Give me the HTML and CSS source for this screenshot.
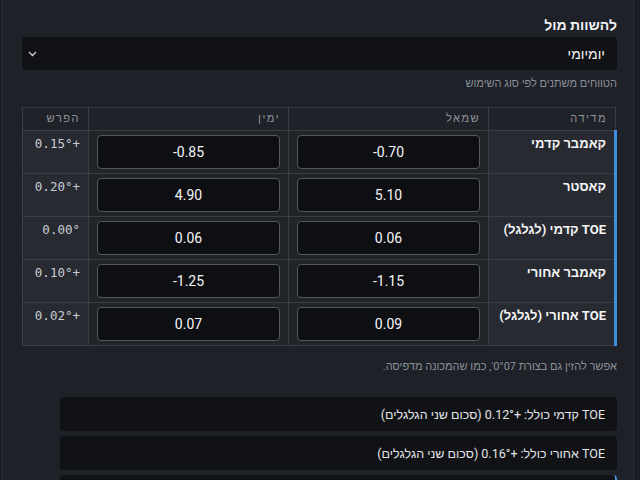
FILE: index.html
```html
<!DOCTYPE html>
<html lang="he" dir="rtl">
<head>
    <meta charset="UTF-8">
    <meta name="viewport" content="width=device-width, initial-scale=1.0">
    <title>השוואת מדידות</title>
    <link rel="stylesheet" href="styles.css">
</head>
<body>
    <div class="card">
        <div class="field-label">להשוות מול</div>
        <div class="select">
            <span>יומיומי</span>
            <svg class="chevron" width="9" height="6" viewBox="0 0 9 6">
                <polyline points="1,1 4.5,4.5 8,1" fill="none" stroke="#c9ccd2" stroke-width="1.3"/>
            </svg>
        </div>
        <p class="hint">הטווחים משתנים לפי סוג השימוש</p>

        <table class="measure-table">
            <colgroup>
                <col class="col-name">
                <col class="col-val">
                <col class="col-val">
                <col class="col-diff">
            </colgroup>
            <thead>
                <tr>
                    <th>מדידה</th>
                    <th>שמאל</th>
                    <th>ימין</th>
                    <th>הפרש</th>
                </tr>
            </thead>
            <tbody>
                <tr>
                    <td class="name">קאמבר קדמי</td>
                    <td class="val"><input value="-0.70"></td>
                    <td class="val"><input value="-0.85"></td>
                    <td class="diff">+0.15°</td>
                </tr>
                <tr>
                    <td class="name">קאסטר</td>
                    <td class="val"><input value="5.10"></td>
                    <td class="val"><input value="4.90"></td>
                    <td class="diff">+0.20°</td>
                </tr>
                <tr>
                    <td class="name">TOE קדמי (לגלגל)</td>
                    <td class="val"><input value="0.06"></td>
                    <td class="val"><input value="0.06"></td>
                    <td class="diff">0.00°</td>
                </tr>
                <tr>
                    <td class="name">קאמבר אחורי</td>
                    <td class="val"><input value="-1.15"></td>
                    <td class="val"><input value="-1.25"></td>
                    <td class="diff">+0.10°</td>
                </tr>
                <tr>
                    <td class="name">TOE אחורי (לגלגל)</td>
                    <td class="val"><input value="0.09"></td>
                    <td class="val"><input value="0.07"></td>
                    <td class="diff">+0.02°</td>
                </tr>
            </tbody>
        </table>

        <p class="hint note">אפשר להזין גם בצורת 0°07', כמו שהמכונה מדפיסה.</p>

        <div class="summary">
            <div class="summary-row">TOE קדמי כולל: +0.12° (סכום שני הגלגלים)</div>
            <div class="summary-row">TOE אחורי כולל: +0.16° (סכום שני הגלגלים)</div>
            <div class="summary-row active"></div>
        </div>
    </div>
</body>
</html>
```

FILE: styles.css
```css
body {
    margin: 0;
    padding: 0 6px 0 2px;
    background-color: #1b1e24;
    color: #e6e8eb;
    font-family: Roboto, "Liberation Sans", sans-serif;
}
.card {
    background-color: #1e2128;
    border: 1px solid #2b2f37;
    border-top: none;
    padding: 16px 16px 40px 19px;
    min-height: 480px;
    box-sizing: border-box;
}
.field-label {
    font-size: 14px;
    font-weight: bold;
    line-height: 18px;
    color: #f1f2f4;
}
.select {
    margin-top: 3px;
    height: 33px;
    background-color: #111215;
    border-radius: 4px;
    display: flex;
    align-items: center;
    justify-content: space-between;
    padding: 0 12px 0 6px;
    font-size: 14px;
    color: #f1f2f4;
}
.chevron {
    display: block;
}
.hint {
    margin: 6px 0 0;
    font-size: 11px;
    line-height: 16px;
    color: #8b9097;
}

/* טבלת המדידות */
.measure-table {
    width: 100%;
    margin-top: 15px;
    border-collapse: collapse;
    table-layout: fixed;
}
.col-name {
    width: 127px;
}
.col-val {
    width: 200px;
}
.col-diff {
    width: 66px;
}
.measure-table th,
.measure-table td {
    border: 1px solid #3a3d44;
    text-align: right;
    vertical-align: top;
}
.measure-table th {
    background-color: #1f2229;
    padding: 4px 8px;
    font-size: 11px;
    line-height: 14px;
    font-weight: normal;
    letter-spacing: 1.5px;
    color: #8e939a;
}
.measure-table td {
    padding: 4px 8px;
    background-color: #212429;
}
.measure-table td.name {
    background-color: #272a30;
    border-right: 3px solid #3f8fe0;
    font-size: 13px;
    font-weight: bold;
    line-height: 18px;
    padding: 4px 8px 4px 0;
    white-space: nowrap;
    color: #f4f5f7;
}
.measure-table td.diff {
    background-color: #272a30;
    font-family: "DejaVu Sans Mono", monospace;
    font-size: 12.5px;
    line-height: 18px;
    color: #c9cdd3;
}
.val input {
    display: block;
    width: 100%;
    height: 34px;
    box-sizing: border-box;
    background-color: #0e0f12;
    border: 1px solid #54575e;
    border-radius: 4px;
    color: #f4f5f7;
    font-family: Roboto, "Liberation Sans", sans-serif;
    font-size: 14px;
    text-align: center;
    direction: ltr;
}
.note {
    margin-top: 13px;
}

/* סיכומים */
.summary {
    margin: 22px 0 0 38px;
    display: flex;
    flex-direction: column;
    gap: 5px;
}
.summary-row {
    height: 34px;
    display: flex;
    align-items: center;
    padding: 0 12px;
    background-color: #111215;
    border-radius: 4px;
    font-size: 12.5px;
    color: #e3e5e8;
}
.summary-row.active {
    border-right: 2px solid #3f8fe0;
}
```
